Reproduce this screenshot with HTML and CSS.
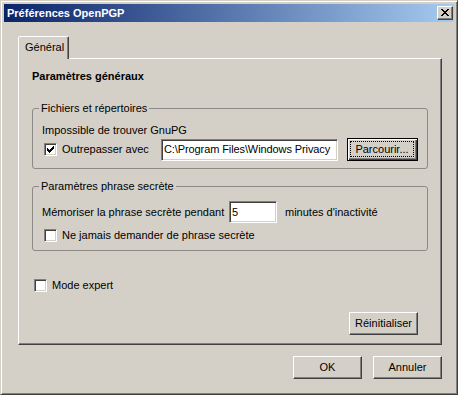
FILE: index.html
```html
<!DOCTYPE html>
<html lang="fr">
<head>
	<title>Préférences OpenPGP</title>
	<meta charset="utf-8">
	<link rel="stylesheet" href="styles.css">
</head>
<body>
	<div class="window">
		<div class="titlebar">
			<span class="title">Préférences OpenPGP</span>
			<span class="close">
				<svg width="8" height="7" viewBox="0 0 8 7" shape-rendering="crispEdges"><path d="M0 0h2v1h-2zM6 0h2v1h-2zM1 1h2v1h-2zM5 1h2v1h-2zM2 2h4v1h-4zM3 3h2v1h-2zM2 4h4v1h-4zM1 5h2v1h-2zM5 5h2v1h-2zM0 6h2v1h-2zM6 6h2v1h-2z"/></svg>
			</span>
		</div>
		<div class="client">
			<div class="tabs">
				<div class="tab">Général</div>
			</div>
			<div class="panel">
				<div class="heading">Paramètres généraux</div>
				<fieldset class="group first">
					<legend>Fichiers et répertoires</legend>
					<div class="line">Impossible de trouver GnuPG</div>
					<div class="row path-row">
						<div class="check path-label">
							<span class="box"><svg width="9" height="9" viewBox="0 0 9 9" shape-rendering="crispEdges"><path d="M1 3h1v1h1v1h1v-1h1v-1h1v-1h1v-1h1v3h-1v1h-1v1h-1v1h-1v1h-1v-1h-1v-1h-1z"/></svg></span>
							<span>Outrepasser avec</span>
						</div>
						<div class="edit path">C:\Program Files\Windows Privacy</div>
						<div class="btn default browse"><span class="focus">Parcourir...</span></div>
					</div>
				</fieldset>
				<fieldset class="group second">
					<legend>Paramètres phrase secrète</legend>
					<div class="row">
						<span class="memo-label">Mémoriser la phrase secrète pendant</span>
						<div class="edit minutes">5</div>
						<span class="after">minutes d'inactivité</span>
					</div>
					<div class="check never">
						<span class="box"></span>
						<span>Ne jamais demander de phrase secrète</span>
					</div>
				</fieldset>
				<div class="check expert">
					<span class="box"></span>
					<span>Mode expert</span>
				</div>
				<div class="reset-row">
					<div class="btn">Réinitialiser</div>
				</div>
			</div>
			<div class="footer">
				<div class="btn">OK</div>
				<div class="btn">Annuler</div>
			</div>
		</div>
	</div>
</body>
</html>
```

FILE: styles.css
```css
body {
	background: #d4d0c8;
	color: #000;
	font: 11px "Liberation Sans", Arial, sans-serif;
	line-height: 13px;
	margin: 0;
}

.window {
	background: #d4d0c8;
	border: 1px solid;
	border-color: #d4d0c8 #404040 #404040 #d4d0c8;
	box-shadow: inset 1px 1px #fff, inset -1px -1px #808080;
	box-sizing: border-box;
	display: flex;
	flex-direction: column;
	height: 395px;
	padding: 3px 3px 0;
	width: 458px;
}

.titlebar {
	align-items: center;
	background: linear-gradient(to right, #0a246a, #a6caf0);
	color: #fff;
	display: flex;
	flex: none;
	font-weight: bold;
	height: 18px;
	padding: 0 1px 0 3px;
}

.title {
	flex: 1;
}

.close {
	align-items: center;
	background: #d4d0c8;
	border: 1px solid;
	border-color: #fff #404040 #404040 #fff;
	box-shadow: inset -1px -1px #808080;
	box-sizing: border-box;
	display: flex;
	height: 14px;
	justify-content: center;
	padding: 0 1px 1px 0;
	width: 16px;
}

.close svg {
	display: block;
}

.client {
	display: flex;
	flex: 1;
	flex-direction: column;
	padding: 14px 12px 0 14px;
}

.tabs {
	display: flex;
}

.tab {
	background: #d4d0c8;
	border: 1px solid;
	border-bottom: 0;
	border-color: #fff #404040 transparent #fff;
	border-radius: 2px 2px 0 0;
	box-shadow: inset -1px 0 #808080;
	box-sizing: border-box;
	height: 23px;
	margin-bottom: -1px;
	padding: 4px 0 0 6px;
	position: relative;
	width: 51px;
	z-index: 1;
}

.panel {
	border: 1px solid;
	border-color: #fff #404040 #404040 #fff;
	box-shadow: inset -1px -1px #808080;
	box-sizing: border-box;
	display: flex;
	flex: none;
	flex-direction: column;
	height: 287px;
	padding: 11px 13px 9px 13px;
}

.heading {
	font-weight: bold;
}

.group {
	border: 1px solid #8c8a86;
	border-radius: 3px;
	margin: 0;
	min-width: 0;
	padding: 9px 9px 7px;
}

.group legend {
	line-height: 13px;
	margin-left: -3px;
	padding: 0 2px;
}

.group.first {
	margin-top: 19px;
}

.group.second {
	margin-top: 11px;
	padding-top: 8px;
	padding-bottom: 8px;
}

.row {
	align-items: center;
	display: flex;
}

.path-row {
	height: 23px;
	margin-top: 1px;
}

.check {
	align-items: center;
	display: flex;
	height: 13px;
}

.path-label {
	margin-left: 2px;
	width: 117px;
}

.box {
	background: #fff;
	border: 1px solid;
	border-color: #808080 #fff #fff #808080;
	box-shadow: inset 1px 1px #404040, inset -1px -1px #d4d0c8;
	box-sizing: border-box;
	display: block;
	flex: none;
	height: 13px;
	margin-right: 5px;
	width: 13px;
}

.box svg {
	display: block;
	margin: 1px;
}

.edit {
	align-items: center;
	background: #fff;
	border: 1px solid;
	border-color: #808080 #fff #fff #808080;
	box-shadow: inset 1px 1px #404040, inset -1px -1px #d4d0c8;
	box-sizing: border-box;
	display: flex;
	height: 22px;
	padding: 0 2px;
	white-space: nowrap;
}

.path {
	letter-spacing: -0.1px;
	overflow: hidden;
	width: 177px;
}

.btn {
	align-items: center;
	background: #d4d0c8;
	border: 1px solid;
	border-color: #fff #404040 #404040 #fff;
	box-shadow: inset -1px -1px #808080;
	box-sizing: border-box;
	display: flex;
	height: 23px;
	justify-content: center;
	width: 69px;
}

.btn.default {
	border-color: #000;
	box-shadow: inset 1px 1px #fff, inset -1px -1px #404040, inset -2px -2px #808080;
	padding: 2px 3px 3px 2px;
}

.browse {
	margin-left: 9px;
	width: 71px;
}

.focus {
	align-items: center;
	align-self: stretch;
	border: 1px dotted #000;
	display: flex;
	flex: 1;
	justify-content: center;
}

.second .row {
	height: 22px;
}

.memo-label {
	width: 187px;
}

.minutes {
	width: 48px;
}

.after {
	margin-left: 8px;
}

.never {
	margin: 6px 0 0 2px;
}

.expert {
	margin: 28px 0 0 2px;
}

.reset-row {
	display: flex;
	justify-content: flex-end;
	margin-top: auto;
	padding-right: 10px;
}

.footer {
	display: flex;
	gap: 11px;
	justify-content: flex-end;
	margin-top: 11px;
}
```
